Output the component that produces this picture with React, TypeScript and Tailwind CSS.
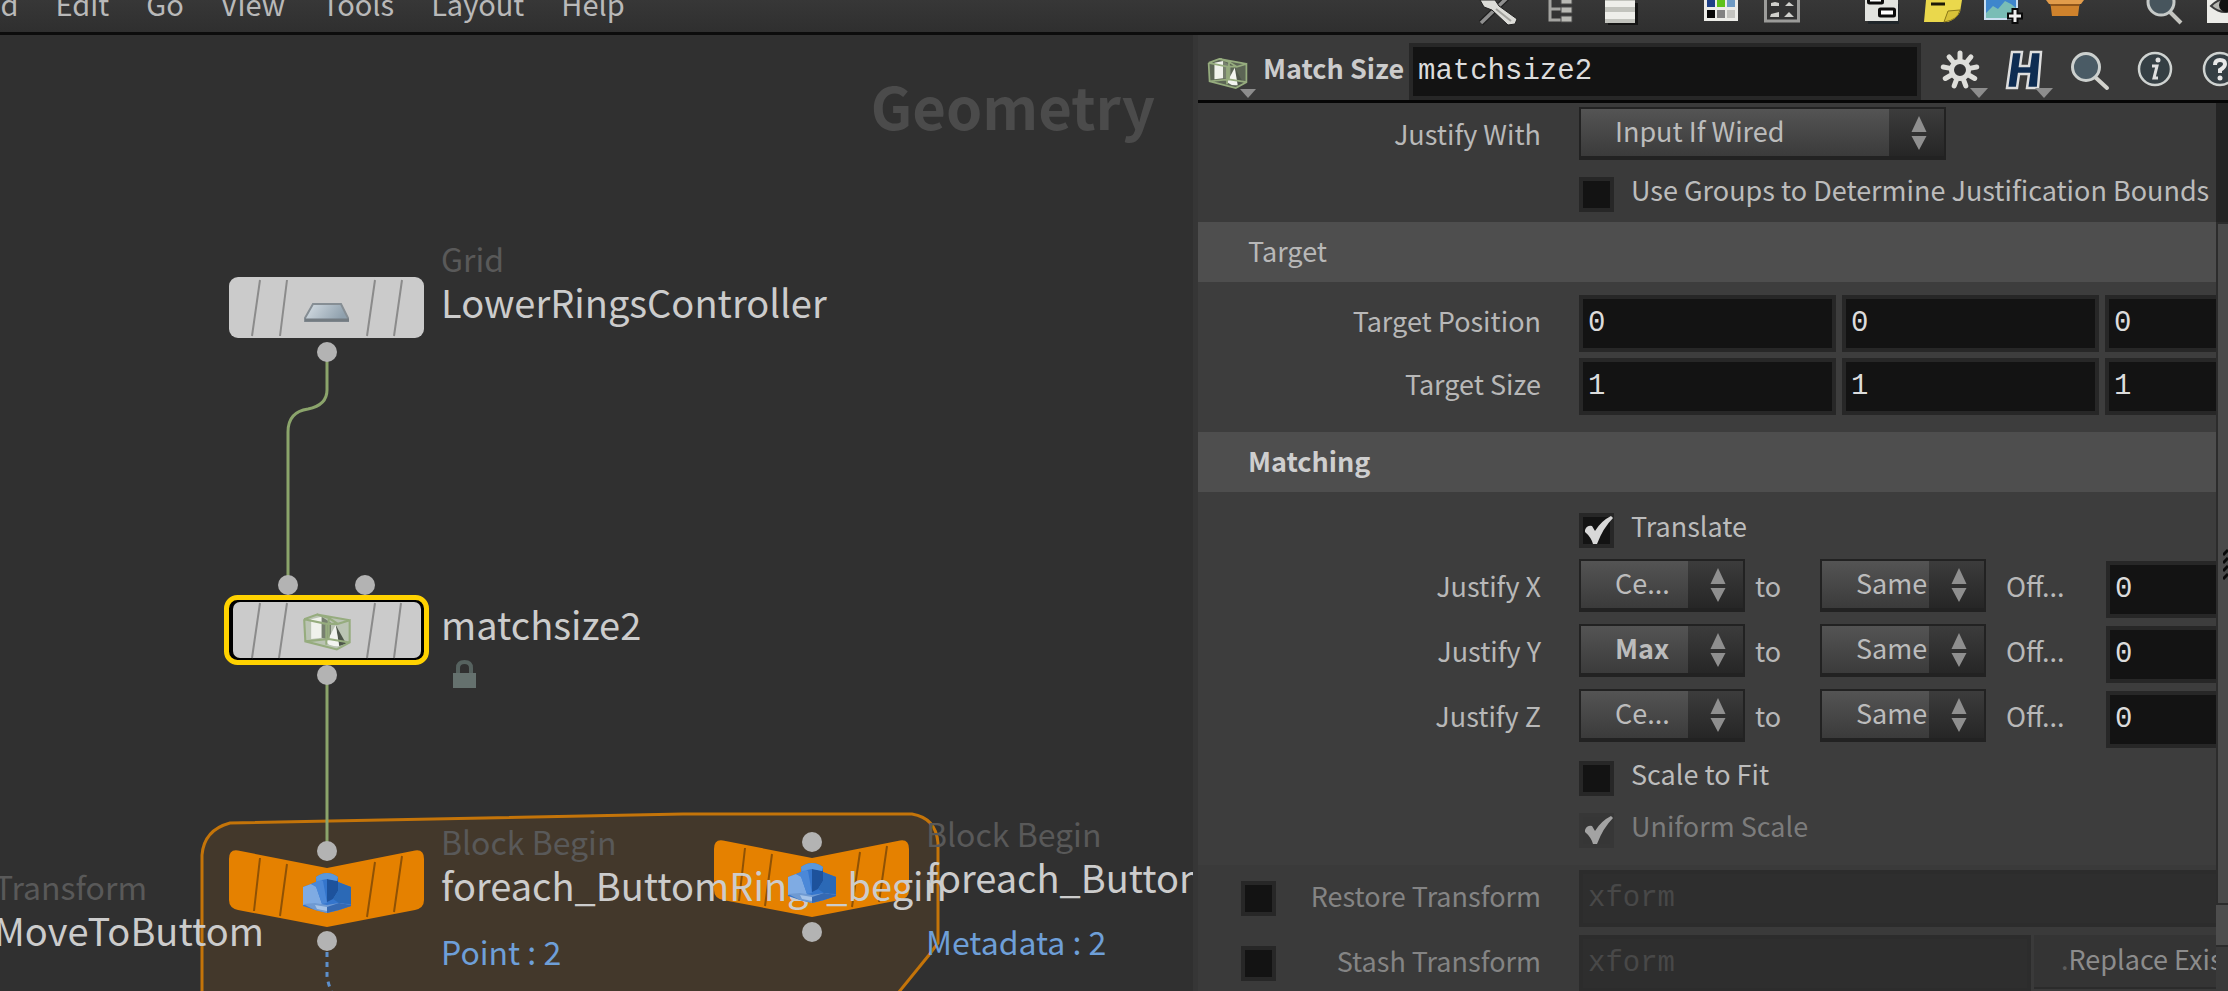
import type { ReactNode } from "react";

const sans = "font-['Noto_Sans_CJK_JP','Noto_Sans_CJK_SC','Open_Sans',sans-serif]";
const mono = "font-['Liberation_Mono',monospace]";

/* ---------- Menu bar ---------- */

const menus = ["Add", "Edit", "Go", "View", "Tools", "Layout", "Help"];

function ToolButton({ label, children }: { label: string; children: ReactNode }) {
  return (
    <button aria-label={label} className="flex w-[61px] shrink-0 justify-center">
      {children}
    </button>
  );
}

function MenuBar() {
  return (
    <header className="flex h-[35px] shrink-0 items-start justify-between overflow-hidden border-b-[3px] border-[#0c0c0c] bg-linear-to-b from-[#373737] to-[#2f2f2f]">
      <nav className="-mt-[13px] -ml-[35px] flex gap-[37px]">
        {menus.map((m) => (
          <button key={m} className="text-[29px] leading-8 text-[#b9b9b9]">
            {m}
          </button>
        ))}
      </nav>
      <div className="-mr-[28px] flex gap-[39px]">
        <div className="flex">
          <ToolButton label="Tools">
            <svg width="42" height="30" viewBox="0 0 42 30">
              <path d="M3 23 30 -3" stroke="#202020" strokeWidth="6" />
              <path d="M3 23 30 -3" stroke="#8f8f8f" strokeWidth="3.500" />
              <path d="M2 0H17L21 6 39 19 37 24 30 25 14 10 6 7Z" fill="#dcdcd8" stroke="#222" />
              <path d="M18 9 33 21" stroke="#a2a29e" strokeWidth="2" />
            </svg>
          </ToolButton>
          <ToolButton label="Tree view">
            <svg width="26" height="30" viewBox="0 0 26 30">
              <path d="M3 0V20H14M3 9H14" stroke="#a3a3a0" strokeWidth="3" fill="none" />
              <path d="M14 -3H25V4H14ZM14 7H25V13H14ZM14 16H25V22H14Z" fill="#b9b9b4" stroke="#4a4a4a" />
            </svg>
          </ToolButton>
          <ToolButton label="List view">
            <svg width="34" height="30" viewBox="0 0 34 30">
              <path d="M4 3H34V25H4Z" fill="#151515" />
              <path d="M1 0H31V23H1Z" fill="#c2c3bd" />
              <path d="M1 1H31V7H1ZM1 12H31V19H1Z" fill="#eeeeea" />
            </svg>
          </ToolButton>
        </div>
        <div className="flex">
          <ToolButton label="Color palette">
            <svg width="34" height="30" viewBox="0 0 34 30">
              <path d="M0 0H34V21H0Z" fill="#ecece8" />
              <path d="M3 0H11V7H3Z" fill="#1d3f86" />
              <path d="M13 0H21V7H13Z" fill="#5dc21a" />
              <path d="M23 0H31V7H23Z" fill="#6f9bc4" />
              <path d="M3 10H11V18H3Z" fill="#060606" />
              <path d="M13 10H21V18H13Z" fill="#828282" />
              <path d="M23 10H31V18H23Z" fill="#c3c3bf" />
            </svg>
          </ToolButton>
          <ToolButton label="Shape palette">
            <svg width="36" height="30" viewBox="0 0 36 30">
              <path d="M1.500 -3V21H34.500V-3" fill="#333" stroke="#9b9b99" strokeWidth="3" />
              <path d="M7 3 11 2 15 3V6H7ZM25 2 30 6H21ZM7 14 15 12V17H6ZM25 12 30 17H20Z" fill="#d0d0cc" />
            </svg>
          </ToolButton>
        </div>
        <div className="flex">
          <ToolButton label="Network boxes">
            <svg width="34" height="30" viewBox="0 0 34 30">
              <path d="M3 4H34V24H3Z" fill="#20262a" />
              <path d="M0 0H33V21H0Z" fill="#e2e3df" />
              <rect x="3.500" y="-5" width="14" height="8" rx="1" fill="#fff" stroke="#0b0b0b" strokeWidth="3" />
              <rect x="14.500" y="9" width="15" height="7" rx="1" fill="#fff" stroke="#0b0b0b" strokeWidth="3" />
            </svg>
          </ToolButton>
          <ToolButton label="Sticky note">
            <svg width="38" height="30" viewBox="0 0 38 30">
              <path d="M2 0H38L36 12Q32 19 24 22L0 22Z" fill="#ead84c" />
              <path d="M20 22 24 11 36 10Q34 20 20 22Z" fill="#d8c238" stroke="#8a7818" />
              <path d="M7 4H21" stroke="#1c1a08" strokeWidth="3" />
            </svg>
          </ToolButton>
          <ToolButton label="Add image">
            <svg width="42" height="30" viewBox="0 0 42 30">
              <path d="M1 0H35V20H1Z" fill="#c9def0" />
              <path d="M3 0H33V18H3Z" fill="#3e86cc" />
              <path d="M3 18V13L10 6 15 9 22 1 28 4 33 8V18Z" fill="#79bdb6" />
              <path d="M32 8V24M24 16H40" stroke="#0b0b0b" strokeWidth="7" />
              <path d="M32 10V22M26 16H38" stroke="#f0f0f0" strokeWidth="3" />
            </svg>
          </ToolButton>
          <ToolButton label="Asset box">
            <svg width="38" height="30" viewBox="0 0 38 30">
              <path d="M4 0H34L32 16H6Z" fill="#cf822c" />
              <path d="M0 0H38L35 4H3Z" fill="#e29c4b" />
              <path d="M5 4H33V6H5Z" fill="#90551a" />
            </svg>
          </ToolButton>
        </div>
        <div className="flex">
          <ToolButton label="Find">
            <svg width="40" height="30" viewBox="0 0 40 30">
              <path d="M25 12 36 23" stroke="#c4c4bf" strokeWidth="4" />
              <circle cx="16" cy="2" r="13" fill="#47555d" stroke="#c6cac8" strokeWidth="3" />
            </svg>
          </ToolButton>
          <ToolButton label="Visibility">
            <svg width="37" height="30" viewBox="0 0 37 30">
              <path d="M0 0H37V23H0Z" fill="#ecece8" />
              <path d="M4 6Q18 -8 32 6Q18 18 4 6Z" fill="#b5b5b0" stroke="#3c3c3c" strokeWidth="2" />
              <circle cx="19" cy="5" r="7" fill="#121212" />
            </svg>
          </ToolButton>
        </div>
      </div>
    </header>
  );
}

/* ---------- Node icons ---------- */

function MatchSizeIcon({ x = 0, y = 0, w = 42, h = 32 }) {
  return (
    <svg x={x} y={y} width={w} height={h} viewBox="0 0 42 32">
      <path d="M1 5 12 1 40 6V25L29 31 2 24Z" fill="#9fb88a" fillOpacity="0.35" />
      <path d="M7 5 16 3V21L7 22Z" fill="#f0f2ec" />
      <path d="M16 3 24 8V23L16 21Z" fill="#77806f" />
      <path d="M28 10 37 26 31 28Z" fill="#4e554a" />
      <path d="M28 10 20 25Q25 29 31 28Z" fill="#f3f4f0" />
      <path
        d="M1 5 12 1 22 4V22M1 5 2 24 29 31 40 25V6L30 9 22 4M1 5 20 9H30M12 1 40 6M20 9V27M2 24 22 22 40 25"
        fill="none"
        stroke="#96ac7e"
        strokeWidth="1.800"
      />
    </svg>
  );
}

function BlockIcon({ x, y }: { x: number; y: number }) {
  return (
    <svg x={x} y={y} width="48" height="40" viewBox="0 0 48 40">
      <path d="M13 4Q24 -4 35 4V9L40 11 48 14V33L36 37 24 40 12 37 0 33V14L8 11 13 9Z" fill="#3475cc" />
      <path d="M0 14 8 11 13 13 19 31 12 31 0 32Z" fill="#7fabe3" />
      <path d="M8 11 13 9V4L20 8 24 30 19 31 13 14Z" fill="#4b88d8" />
      <path d="M24 6 35 8V18L30 26 24 29Z" fill="#1d529c" />
      <path d="M35 9 48 14V31L36 30 30 26 35 18Z" fill="#2b69b6" />
      <path d="M13 4Q24 -4 35 4L34 8 24 6 14 8Z" fill="#5a98dc" />
      <path d="M0 31 12 30 24 32 36 30 48 32 36 37 24 40 12 37Z" fill="#6f9ad2" />
      <path d="M24 34 36 30 48 32V33L36 37 24 40Z" fill="#3569b2" />
      <path d="M12 32 24 34V38L14 36Z" fill="#a5c3e8" />
    </svg>
  );
}

/* ---------- Network editor ---------- */

const blockPath =
  "M0 9Q0 -1 9 0.500L98 18 186 0.500Q195 -1 195 9V50Q195 58 186 60L98 77 9 60Q0 58 0 50Z";

function NodeText({ className, children }: { className: string; children: ReactNode }) {
  return <span className={`absolute whitespace-nowrap ${className}`}>{children}</span>;
}

const kind = "text-[32px] leading-[42px] text-[#595959]";
const title = "text-[38px] leading-[54px] text-[#cccccc]";
const info = "text-[32px] leading-[42px] text-[#6e9fd8]";

function NetworkEditor() {
  return (
    <main className="relative overflow-hidden bg-[#303030]">
      <NodeText className="top-[30px] right-[38px] text-[58px] leading-[80px] font-bold text-[#4b4b4b]">
        Geometry
      </NodeText>

      <svg className="absolute top-0 left-0" width="1193" height="956" viewBox="0 35 1193 956">
        <path
          d="M202 1010V855Q204 830 230 823L683 814H912Q936 818 938 843V943L929 955 890 1003 880 1010Z"
          fill="#43382b"
          stroke="#c47409"
          strokeWidth="3"
        />
        <path
          d="M327 352V390C327 402 318 407 308 409 294 411 288 420 288 432V585M327 675V851"
          fill="none"
          stroke="#8ba46b"
          strokeWidth="3"
        />
        <path d="M327 952V976Q328 984 333 996" fill="none" stroke="#5d8fcb" strokeWidth="3" strokeDasharray="5 5" />

        <rect x="229" y="277" width="195" height="61" rx="9" fill="#cbcbcb" />
        <path d="M260 280 252 336M287 280 280 336M375 280 367 336M402 280 394 336" stroke="#8b8b8b" strokeWidth="2" />
        <defs>
          <linearGradient id="grid" x1="0" x2="1" y1="0" y2="0.300">
            <stop offset="0" stopColor="#d8e0e6" />
            <stop offset="1" stopColor="#8fa0ad" />
          </linearGradient>
        </defs>
        <path d="M313 304H341L348 318V321H305V318Z" fill="url(#grid)" stroke="#868e94" strokeWidth="2" />
        <path d="M305 320H349" stroke="#737b81" strokeWidth="3" />

        <rect x="226.500" y="597.500" width="200" height="65" rx="11" fill="#000" stroke="#ffd200" strokeWidth="5" />
        <rect x="233" y="602" width="188" height="56" rx="7" fill="#cbcbcb" />
        <path d="M260 603 252 658M287 603 279 658M375 603 367 658M401 603 394 658" stroke="#8b8b8b" strokeWidth="2" />
        <MatchSizeIcon x={303} y={613} w={49} h={38} />

        <path d="M458 674V668Q458 662 464.500 662T471 668V674" fill="none" stroke="#56625f" strokeWidth="4" />
        <path d="M453 673H476V688H453Z" fill="#65716e" />

        <g fill="#b3b3b3">
          <circle cx="327" cy="352" r="10" />
          <circle cx="288" cy="585" r="10" />
          <circle cx="365" cy="585" r="10" />
          <circle cx="327" cy="675" r="10" />
          <circle cx="327" cy="851" r="10" />
          <circle cx="327" cy="941" r="10" />
          <circle cx="812" cy="842" r="10" />
          <circle cx="812" cy="932" r="10" />
        </g>

        <g transform="translate(229 850)">
          <path d={blockPath} fill="#e58100" />
          <path d="M31 8 25 61M58 14 51 66M146 12 138 67M173 6 165 62" stroke="#8f5205" strokeWidth="2" />
        </g>
        <g transform="translate(714 840)">
          <path d={blockPath} fill="#e58100" />
          <path d="M31 8 25 61M58 14 51 66M146 12 138 67M173 6 165 62" stroke="#8f5205" strokeWidth="2" />
        </g>
      </svg>

      <NodeText className={`top-[202px] left-[441px] ${kind}`}>Grid</NodeText>
      <NodeText className={`top-[240px] left-[441px] ${title}`}>LowerRingsController</NodeText>
      <NodeText className={`top-[562px] left-[441px] ${title}`}>matchsize2</NodeText>

      <NodeText className={`top-[830px] -left-[6px] ${kind}`}>Transform</NodeText>
      <NodeText className={`top-[868px] -left-[6px] ${title}`}>MoveToButtom</NodeText>

      <NodeText className={`top-[785px] left-[441px] ${kind}`}>Block Begin</NodeText>
      <NodeText className={`top-[823px] left-[441px] ${title}`}>foreach_ButtomRings_begin</NodeText>
      <NodeText className={`top-[895px] left-[441px] ${info}`}>Point : 2</NodeText>

      <svg className="absolute top-0 left-0" width="1193" height="956" viewBox="0 35 1193 956">
        <BlockIcon x={303} y={873} />
        <BlockIcon x={788} y={863} />
      </svg>

      <NodeText className={`top-[777px] left-[926px] ${kind}`}>Block Begin</NodeText>
      <NodeText className={`top-[815px] left-[926px] ${title}`}>foreach_ButtomRings_begin</NodeText>
      <NodeText className={`top-[885px] left-[926px] ${info}`}>Metadata : 2</NodeText>
    </main>
  );
}

/* ---------- Parameter controls ---------- */

function Field({ id, label, value, disabled = false, className = "w-[257px]" }: {
  id: string;
  label?: string;
  value: string;
  disabled?: boolean;
  className?: string;
}) {
  return (
    <input
      id={id}
      aria-label={label}
      defaultValue={value}
      disabled={disabled}
      className={`h-[57px] shrink-0 border-4 border-[#272727] bg-[#131313] px-[5px] text-[29px] text-[#dcdcdc] outline-none disabled:border-[#2c2c2c] disabled:bg-[#2e2e2e] disabled:text-[#484848] ${mono} ${className}`}
    />
  );
}

function Dropdown({ id, label, value, bold = false, className = "w-[166px]" }: {
  id: string;
  label?: string;
  value: string;
  bold?: boolean;
  className?: string;
}) {
  return (
    <div
      className={`relative flex h-[53px] shrink-0 self-start border-2 border-b-4 border-[#222222] bg-linear-to-b from-[#545454] to-[#3b3b3b] ${className}`}
    >
      <select
        id={id}
        aria-label={label}
        className={`w-full appearance-none pb-[3px] pl-[34px] text-[27px] leading-8 text-[#bcbcbc] outline-none ${bold ? "font-bold" : ""}`}
      >
        <option>{value}</option>
      </select>
      <span className="pointer-events-none absolute inset-y-0 right-0 flex w-[55px] items-center justify-center bg-linear-to-b from-[#3c3c3c] to-[#262626] pl-1">
        <svg width="16" height="34" viewBox="0 0 16 34">
          <path d="M8 0 15.500 16H0.500ZM8 34 15.500 20H0.500Z" fill="#8f8f8f" />
        </svg>
      </span>
    </div>
  );
}

function Check({ id, label, checked = false, disabled = false }: {
  id: string;
  label?: string;
  checked?: boolean;
  disabled?: boolean;
}) {
  return (
    <span className="relative block size-[35px] shrink-0">
      <input
        id={id}
        aria-label={label}
        type="checkbox"
        defaultChecked={checked}
        disabled={disabled}
        className="peer block size-full appearance-none border-4 border-[#272727] bg-[#131313] disabled:border-[#373737] disabled:bg-[#363636]"
      />
      <svg
        className="pointer-events-none absolute inset-0 hidden text-[#d8d8d8] peer-checked:block peer-disabled:text-[#a3a3a3]"
        width="35"
        height="35"
        viewBox="0 0 35 35"
      >
        <path d="M6 17Q8 12 13 13L16 18Q22 8 32 3L34 5Q24 15 18 31H14Q12 24 6 19Z" fill="currentColor" />
      </svg>
    </span>
  );
}

function CheckRow({ id, text, checked, disabled }: {
  id: string;
  text: string;
  checked?: boolean;
  disabled?: boolean;
}) {
  return (
    <div className="flex h-[35px] items-center gap-[17px] pl-[381px]">
      <Check id={id} checked={checked} disabled={disabled} />
      <label
        htmlFor={id}
        className={`pb-[9px] whitespace-nowrap ${disabled ? "text-[#7c7c7c]" : "text-[#bcbcbc]"}`}
      >
        {text}
      </label>
    </div>
  );
}

function RowLabel({ htmlFor, children }: { htmlFor: string; children: ReactNode }) {
  return (
    <label htmlFor={htmlFor} className="mr-[38px] w-[343px] shrink-0 self-center pb-[6px] text-right">
      {children}
    </label>
  );
}

function VectorRow({ name, id, value }: { name: string; id: string; value: string }) {
  return (
    <div className="flex items-center">
      <RowLabel htmlFor={`${id}-x`}>{name}</RowLabel>
      <div className="flex gap-[6px]">
        <Field id={`${id}-x`} value={value} />
        <Field id={`${id}-y`} label={`${name} Y`} value={value} />
        <Field id={`${id}-z`} label={`${name} Z`} value={value} />
      </div>
    </div>
  );
}

function JustifyRow({ axis, value, bold }: { axis: string; value: string; bold?: boolean }) {
  const id = `justify-${axis.toLowerCase()}`;
  return (
    <div className="flex h-[59px] items-end">
      <RowLabel htmlFor={id}>Justify {axis}</RowLabel>
      <Dropdown id={id} value={value} bold={bold} />
      <label htmlFor={`${id}-to`} className="w-[75px] shrink-0 self-center pb-[6px] pl-[10px]">
        to
      </label>
      <Dropdown id={`${id}-to`} value="Same" />
      <label htmlFor={`${id}-offset`} className="w-[120px] shrink-0 self-center pb-[6px] pl-5">
        Off...
      </label>
      <Field id={`${id}-offset`} value="0" />
    </div>
  );
}

function SectionHeader({ bold = false, children }: { bold?: boolean; children: ReactNode }) {
  return (
    <h2
      className={`flex h-[60px] items-center bg-[#4e4e4e] pb-[2px] pl-[50px] ${bold ? "font-bold text-[#cfcfcf]" : ""}`}
    >
      {children}
    </h2>
  );
}

function StoreRow({ id, name, children }: { id: string; name: string; children: ReactNode }) {
  return (
    <div className="flex h-[57px] items-center">
      <div className="mr-[38px] flex w-[343px] shrink-0 items-center justify-between pl-[43px]">
        <Check id={`${id}-on`} label={`Enable ${name}`} />
        <label htmlFor={id} className="pb-[6px] text-[#848484]">
          {name}
        </label>
      </div>
      {children}
    </div>
  );
}

/* ---------- Parameter pane ---------- */

function HeaderButton({ label, menu = false, children }: { label: string; menu?: boolean; children: ReactNode }) {
  return (
    <button aria-label={label} className="flex h-full w-[65px] shrink-0 items-center justify-center">
      <svg width="60" height="64" viewBox="0 0 60 64">
        {children}
        {menu && <path d="M40 52H58L49 62Z" fill="#8d8d8d" />}
      </svg>
    </button>
  );
}

const gearAngles = [0, 40, 80, 120, 160, 200, 240, 280, 320];

function PaneHeader() {
  return (
    <div className="flex h-[68px] items-end border-b-[3px] border-[#060606] bg-[#3a3a3a]">
      <button aria-label="Node menu" className="mr-[6px] ml-[9px] flex h-full w-[50px] shrink-0 items-center">
        <svg width="50" height="64" viewBox="0 0 50 64">
          <MatchSizeIcon x={0} y={22} w={42} h={31} />
          <path d="M33 53H49L41 62Z" fill="#8d8d8d" />
        </svg>
      </button>
      <label
        htmlFor="node-name"
        className="flex h-[57px] w-[146px] shrink-0 items-center pb-[6px] text-[27px] font-bold whitespace-nowrap text-[#cccccc]"
      >
        Match Size
      </label>
      <Field id="node-name" value="matchsize2" className="min-w-0 flex-1 shrink" />
      <div className="-mr-[24px] ml-[6px] flex h-full shrink-0">
        <HeaderButton label="Settings" menu>
          <g stroke="#dededa" strokeWidth="5" strokeLinecap="round">
            {gearAngles.map((a) => (
              <path key={a} d="M30 23V17" transform={`rotate(${a} 30 34)`} />
            ))}
          </g>
          <circle cx="30" cy="34" r="8.500" fill="#333" stroke="#dededa" strokeWidth="5" />
        </HeaderButton>
        <HeaderButton label="Houdini presets" menu>
          <path
            d="M17 16H27L25 30H34L36 16H46L43 52H32L34 38H24L22 52H12Z"
            fill="#0e2c52"
            stroke="#dedede"
            strokeWidth="2.500"
          />
        </HeaderButton>
        <HeaderButton label="Search">
          <path d="M35 41 47 52" stroke="#d2d2cc" strokeWidth="4" strokeLinecap="round" />
          <circle cx="26" cy="31" r="13.500" fill="#4a5b65" stroke="#ccd0ce" strokeWidth="3" />
        </HeaderButton>
        <HeaderButton label="Info">
          <circle cx="30" cy="33" r="16" fill="#353f44" stroke="#cfd3d1" strokeWidth="2.500" />
          <circle cx="33" cy="24" r="2.500" fill="#e0e0e0" />
          <path d="M27 30H32L29 42H33" fill="none" stroke="#e0e0e0" strokeWidth="3" />
        </HeaderButton>
        <HeaderButton label="Help">
          <circle cx="30" cy="33" r="16" fill="#353f44" stroke="#cfd3d1" strokeWidth="2.500" />
          <path d="M25 29Q25 24 30 24T35 28Q35 31 30 34V37" fill="none" stroke="#e8e8e8" strokeWidth="4" />
          <circle cx="30" cy="42" r="2.500" fill="#e8e8e8" />
        </HeaderButton>
      </div>
    </div>
  );
}

function ParameterPane() {
  return (
    <aside className="flex min-w-0 flex-col overflow-hidden border-l-[5px] border-[#363636] bg-[#3a3a3a]">
      <PaneHeader />
      <div className="flex min-h-0 flex-1">
        <div className="min-w-0 flex-1 overflow-hidden text-[27px] leading-8 text-[#b8b8b8]">
          <div className="flex flex-col gap-[11px] pt-1 pb-[10px]">
            <div className="flex h-[59px] items-end">
              <RowLabel htmlFor="justify-with">Justify With</RowLabel>
              <Dropdown id="justify-with" value="Input If Wired" className="w-[367px]" />
            </div>
            <CheckRow id="use-groups" text="Use Groups to Determine Justification Bounds" />
          </div>

          <SectionHeader>Target</SectionHeader>
          <div className="flex flex-col gap-[6px] bg-[#3d3d3d] pt-[13px] pb-[17px]">
            <VectorRow id="target-position" name="Target Position" value="0" />
            <VectorRow id="target-size" name="Target Size" value="1" />
          </div>

          <SectionHeader bold>Matching</SectionHeader>
          <div className="bg-[#3d3d3d] pt-[21px] pb-[17px]">
            <CheckRow id="translate" text="Translate" checked />
            <div className="flex flex-col gap-[6px] pt-[11px] pb-[13px]">
              <JustifyRow axis="X" value="Ce..." />
              <JustifyRow axis="Y" value="Max" bold />
              <JustifyRow axis="Z" value="Ce..." />
            </div>
            <div className="flex flex-col gap-[17px]">
              <CheckRow id="scale-to-fit" text="Scale to Fit" />
              <CheckRow id="uniform-scale" text="Uniform Scale" checked disabled />
            </div>
          </div>

          <div className="flex flex-col gap-2 pt-[5px]">
            <StoreRow id="restore" name="Restore Transform">
              <Field id="restore" value="xform" disabled className="min-w-0 flex-1 border-r-0" />
            </StoreRow>
            <StoreRow id="stash" name="Stash Transform">
              <Field id="stash" value="xform" disabled className="mr-[3px] w-[452px]" />
              <button
                disabled
                className="h-[54px] w-[240px] shrink-0 self-start border-b-2 border-[#2b2b2b] bg-[#343434] pb-1 pl-[27px] text-left whitespace-nowrap text-[#8c8c8c]"
              >
                <span className="text-[#5c5c5c]">.</span>Replace Existing
              </button>
            </StoreRow>
          </div>
        </div>

        <div className="flex w-3 shrink-0 flex-col bg-[#242424]">
          <div className="h-[119px] shrink-0" />
          <div className="flex h-[683px] shrink-0 items-center justify-end border-y-2 border-l-2 border-[#2c2c2c] bg-[#4a4a4a]">
            <svg width="5" height="32" viewBox="0 0 5 32">
              <path d="M0 7 5 2M0 15 5 10M0 23 5 18M0 31 5 26" stroke="#080808" strokeWidth="3" />
            </svg>
          </div>
          <div className="h-[42px] shrink-0 border-b-2 border-[#2c2c2c] bg-[#4d4d4d]" />
          <div className="flex-1 bg-[#3a3a3a]" />
        </div>
      </div>
    </aside>
  );
}

export default function App() {
  return (
    <div className={`flex h-screen flex-col overflow-hidden bg-[#303030] ${sans}`}>
      <MenuBar />
      <div className="grid min-h-0 flex-1 grid-cols-[1193fr_1035fr]">
        <NetworkEditor />
        <ParameterPane />
      </div>
    </div>
  );
}
